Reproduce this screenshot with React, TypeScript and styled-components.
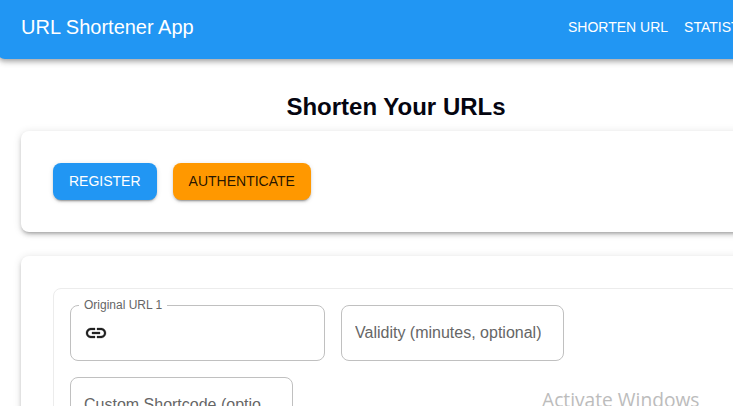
import React from "react";
import styled, { createGlobalStyle } from "styled-components";

const GlobalStyle = createGlobalStyle`
  * { box-sizing: border-box; }
  body { margin: 0; background: #fff; overflow: hidden; font-family: "Liberation Sans", Arial, sans-serif; }
`;

const Viewport = styled.div`
  position: relative;
  width: 100%;
  height: 406px;
  overflow: hidden;
`;

const Page = styled.div`
  width: 798px;
  margin: -5px 0 0 -3px;
`;

const AppBar = styled.header`
  display: flex;
  align-items: center;
  height: 64px;
  padding: 0 24px;
  border-radius: 8px;
  background: #2196f3;
  color: #fff;
  box-shadow: 0 2px 4px -1px rgba(0, 0, 0, 0.2), 0 4px 5px 0 rgba(0, 0, 0, 0.14),
    0 1px 10px 0 rgba(0, 0, 0, 0.12);
`;

const Brand = styled.div`
  flex: 0 0 539px;
  font-size: 20px;
  line-height: 32px;
`;

const NavButton = styled.button`
  flex: none;
  border: 0;
  padding: 6px 8px;
  background: transparent;
  color: inherit;
  font: 14px/24.5px "Liberation Sans", Arial, sans-serif;
  text-transform: uppercase;
  white-space: nowrap;
`;

const Main = styled.main`
  display: flex;
  flex-direction: column;
  padding: 32px 24px 0;
`;

const Heading = styled.h1`
  margin: 0 0 8px;
  font-size: 24px;
  line-height: 32px;
  font-weight: 700;
  text-align: center;
  color: #050510;
`;

const Paper = styled.section`
  margin-bottom: 24px;
  padding: 32px;
  border-radius: 8px;
  background: #fff;
  box-shadow: 0 3px 3px -2px rgba(0, 0, 0, 0.2), 0 3px 4px 0 rgba(0, 0, 0, 0.14),
    0 1px 8px 0 rgba(0, 0, 0, 0.12);
`;

const ButtonRow = styled.div`
  display: flex;
  gap: 16px;
`;

const Button = styled.button<{ $tone: "primary" | "warning" }>`
  border: 0;
  padding: 6px 16px;
  border-radius: 8px;
  background: ${(p) => (p.$tone === "primary" ? "#2196f3" : "#ff9800")};
  color: ${(p) => (p.$tone === "primary" ? "#fff" : "rgba(0, 0, 0, 0.87)")};
  font: 14px/25px "Liberation Sans", Arial, sans-serif;
  text-transform: uppercase;
  box-shadow: 0 3px 1px -2px rgba(0, 0, 0, 0.2), 0 2px 2px 0 rgba(0, 0, 0, 0.14),
    0 1px 5px 0 rgba(0, 0, 0, 0.12);
`;

const Entry = styled.div`
  display: flex;
  flex-wrap: wrap;
  gap: 16px;
  height: 240px;
  align-content: flex-start;
  padding: 16px;
  border: 1px solid #ececec;
  border-radius: 8px;
`;

const Field = styled.fieldset<{ $width: number; $raised?: boolean }>`
  display: flex;
  align-items: center;
  width: ${(p) => p.$width}px;
  height: ${(p) => (p.$raised ? 63 : 56)}px;
  min-width: 0;
  margin: ${(p) => (p.$raised ? "-7px" : "0")} 0 0;
  padding: ${(p) => (p.$raised ? "0 13px 7px" : "0 13px 2px")};
  border: 1px solid #c0c0c0;
  border-radius: 8px;
`;

const Legend = styled.legend`
  margin-left: -5px;
  padding: 0 5px;
  font-size: 12px;
  line-height: 15px;
  color: #666;
`;

const Placeholder = styled.span`
  max-width: 195px;
  overflow: hidden;
  text-overflow: ellipsis;
  white-space: nowrap;
  font-size: 16px;
  line-height: 23px;
  color: #666;
`;

const LinkIcon = styled.svg`
  display: block;
  width: 24px;
  height: 24px;
  fill: #212121;
  stroke: #212121;
  stroke-width: 0.3;
`;

const Watermark = styled.div`
  position: absolute;
  left: 542px;
  top: 386px;
  font: 19.2px/28px "Open Sans", "Noto Sans", sans-serif;
  white-space: nowrap;
  color: #bcbcbc;
`;

export default function App() {
  return (
    <Viewport>
      <GlobalStyle />
      <Page>
        <AppBar>
          <Brand>URL Shortener App</Brand>
          <NavButton>Shorten URL</NavButton>
          <NavButton>Statistics</NavButton>
        </AppBar>
        <Main>
          <Heading>Shorten Your URLs</Heading>
          <Paper>
            <ButtonRow>
              <Button $tone="primary">Register</Button>
              <Button $tone="warning">Authenticate</Button>
            </ButtonRow>
          </Paper>
          <Paper>
            <Entry>
              <Field $width={255} $raised>
                <Legend>Original URL 1</Legend>
                <LinkIcon viewBox="0 0 24 24">
                  <path d="M3.9 12c0-1.71 1.39-3.1 3.1-3.1h4V7H7c-2.76 0-5 2.24-5 5s2.24 5 5 5h4v-1.9H7c-1.71 0-3.1-1.39-3.1-3.1M8 13h8v-2H8zm9-6h-4v1.9h4c1.71 0 3.1 1.39 3.1 3.1s-1.39 3.1-3.1 3.1h-4V17h4c2.76 0 5-2.24 5-5s-2.24-5-5-5" />
                </LinkIcon>
              </Field>
              <Field $width={223}>
                <Placeholder>Validity (minutes, optional)</Placeholder>
              </Field>
              <Field $width={223}>
                <Placeholder>Custom Shortcode (optional)</Placeholder>
              </Field>
            </Entry>
          </Paper>
        </Main>
      </Page>
      <Watermark>Activate Windows</Watermark>
    </Viewport>
  );
}
